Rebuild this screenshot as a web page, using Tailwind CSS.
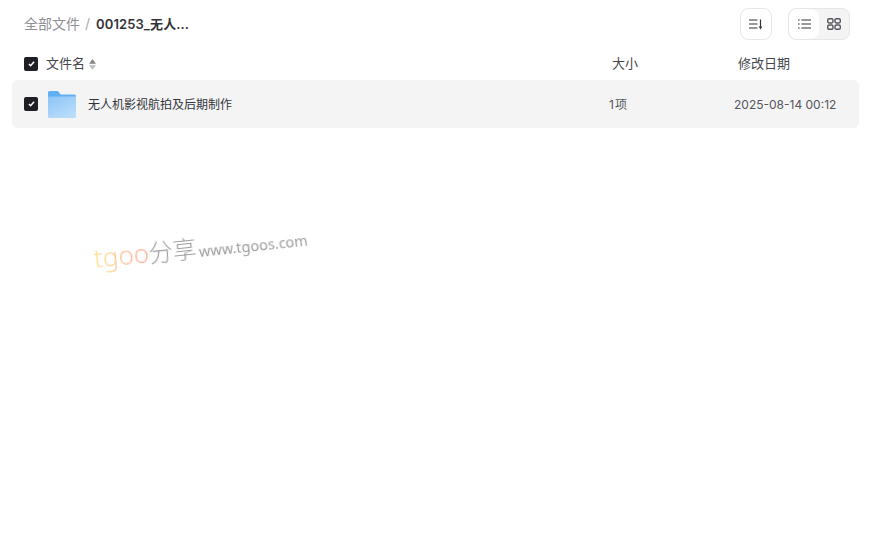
<!DOCTYPE html>
<html lang="en">
<head>
  <meta charset="UTF-8" />
  <meta name="viewport" content="width=device-width, initial-scale=1.0" />
  <title>全部文件</title>
  <script src="https://cdn.jsdelivr.net/npm/@tailwindcss/browser@4"></script>
</head>
<body class="relative h-[538px] w-[874px] overflow-hidden bg-white font-['Inter','Noto_Sans_CJK_SC',sans-serif] text-[13px] text-[#25262b]">

  <!-- Toolbar -->
  <div class="flex h-[40px] items-center pl-6 pr-6 pt-2">
    <div class="flex items-center pb-[2px]">
      <span class="text-[14px] text-[#8f8f95]">全部文件</span>
      <span class="ml-[5px] mr-[6px] text-[14px] text-[#a9a9ae]">/</span>
      <span class="pt-[3px] text-[13px] font-semibold tracking-[0.1px] text-[#33343a]">001253_无人...</span>
    </div>
    <div class="ml-auto flex gap-4">
      <button class="flex h-8 w-8 items-center justify-center rounded-lg border border-[#e6e6e8] bg-white">
        <svg width="14" height="12" viewBox="0 0 14 12" fill="none" stroke="#33343a" stroke-width="1.200">
          <path d="M0 2h8.500M0 6h8.500M0 10h8.500M11.500 1.500v8" />
          <path d="M9.700 8.400h3.600L11.500 11.500z" fill="#33343a" stroke="none" />
        </svg>
      </button>
      <div class="flex h-8 w-[62px] overflow-hidden rounded-lg border border-[#e6e6e8] bg-[#f4f4f5]">
        <button class="flex h-full w-[30px] items-center justify-center rounded-lg bg-white">
          <svg width="13" height="10" viewBox="0 0 13 10" fill="none" stroke="#33343a" stroke-width="1.200">
            <path d="M0 1h1.600M0 5h1.600M0 9h1.600M3.400 1H13M3.400 5H13M3.400 9H13" />
          </svg>
        </button>
        <button class="flex h-full flex-1 items-center justify-center">
          <svg width="14" height="12" viewBox="0 0 14 12" fill="none" stroke="#55565c" stroke-width="1.400">
            <rect x="0.700" y="0.700" width="5.300" height="4.300" rx="1.400" />
            <rect x="8" y="0.700" width="5.300" height="4.300" rx="1.400" />
            <rect x="0.700" y="7" width="5.300" height="4.300" rx="1.400" />
            <rect x="8" y="7" width="5.300" height="4.300" rx="1.400" />
          </svg>
        </button>
      </div>
    </div>
  </div>

  <!-- Table header -->
  <div class="mt-2 flex h-[32px] items-center pl-6 text-[#45464d]">
    <span class="flex h-[14px] w-[14px] items-center justify-center rounded-[2px] bg-[#1e1f24]">
      <svg width="7" height="6" viewBox="0 0 8 7" fill="none" stroke="white" stroke-width="1.800"><path d="M1 3.500l2 2L7 1" /></svg>
    </span>
    <span class="ml-2 flex w-[566px] items-center gap-1">文件名
      <svg width="7" height="11" viewBox="0 0 7 11"><path d="M3.500 0.500L6.500 4.600H0.500z" fill="#808185" stroke="#808185" stroke-linejoin="round" stroke-width="0.500" /><path d="M3.500 10.500L0.500 6.400h6z" fill="#bcbcbf" stroke="#bcbcbf" stroke-linejoin="round" stroke-width="0.500" /></svg>
    </span>
    <span class="w-[126px]">大小</span>
    <span>修改日期</span>
  </div>

  <!-- File row -->
  <div class="ml-3 mr-[15px] flex h-12 items-center rounded-md bg-[#f4f4f5] pl-3">
    <span class="flex h-[14px] w-[14px] items-center justify-center rounded-[2px] bg-[#1e1f24]">
      <svg width="7" height="6" viewBox="0 0 8 7" fill="none" stroke="white" stroke-width="1.800"><path d="M1 3.500l2 2L7 1" /></svg>
    </span>
    <svg class="ml-[9px]" width="30" height="29" viewBox="0 0 30 29">
      <defs>
        <linearGradient id="folderFront" x1="0" y1="0" x2="0.600" y2="1">
          <stop offset="0" stop-color="#8cc4f7" />
          <stop offset="1" stop-color="#b8dcfb" />
        </linearGradient>
      </defs>
      <path d="M1 2.500A1.500 1.500 0 0 1 2.500 1h8.300l3 3.500H27.500A1.500 1.500 0 0 1 29 6v6H1z" fill="#62aff1" />
      <path d="M1 6.500h28V26.500A1.500 1.500 0 0 1 27.500 28H2.500A1.500 1.500 0 0 1 1 26.500z" fill="url(#folderFront)" />
    </svg>
    <span class="ml-[11px] w-[521px] pt-[2px] text-[12px] text-[#33343a]">无人机影视航拍及后期制作</span>
    <span class="w-[125px] pt-[2px] text-[12px] tracking-[1px] text-[#55565c]">1项</span>
    <span class="pt-[2px] text-[12px] text-[#55565c]">2025-08-14 00:12</span>
  </div>

  <!-- Watermark -->
  <div class="absolute left-[94px] top-[239px] flex origin-left rotate-[-6deg] items-baseline whitespace-nowrap font-['Noto_Sans','Noto_Sans_CJK_SC',sans-serif] text-[#9c9c9c] blur-[0.4px]">
    <span class="bg-gradient-to-r from-[#fde08c] to-[#fda99a] bg-clip-text text-[26px] font-light leading-normal text-transparent">tgoo</span>
    <span class="text-[24px] font-light">分享</span>
    <span class="ml-[2px] text-[14.5px]">www.tgoos.com</span>
  </div>
</body>
</html>
